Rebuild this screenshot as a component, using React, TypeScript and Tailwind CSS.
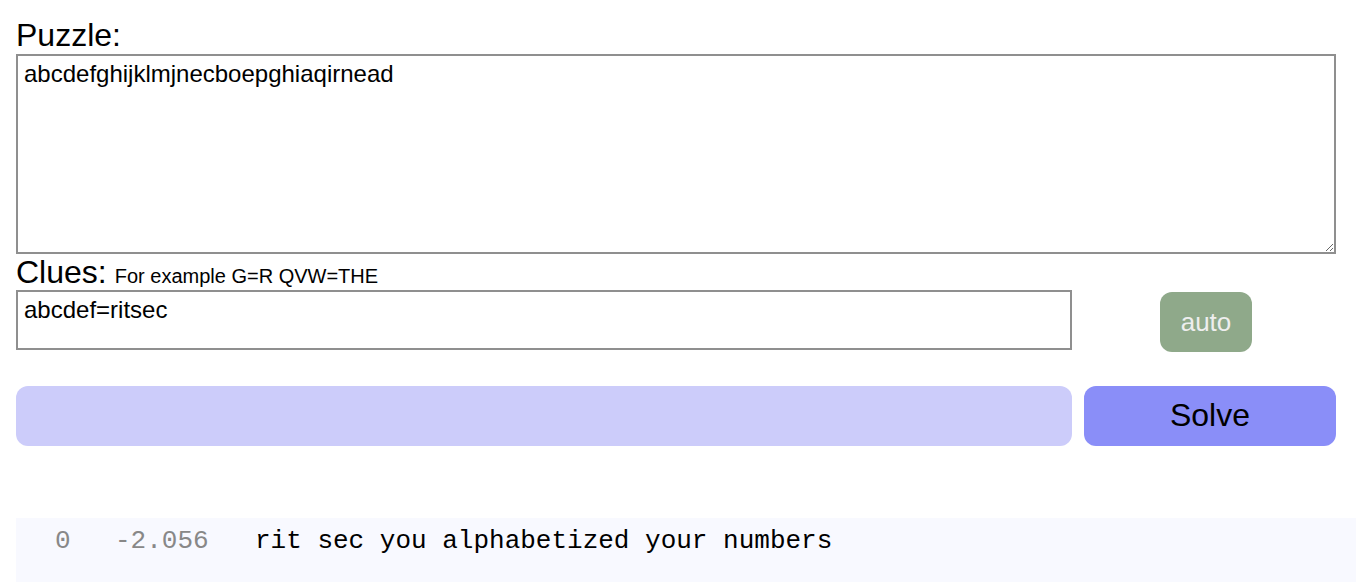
export default function App() {
  return (
    <div className="min-h-screen bg-white pl-4 pr-5 pt-4 font-['Liberation_Sans',Arial,sans-serif] text-black">
      <div className="text-[32px] leading-[38px]">Puzzle:</div>
      <textarea
        defaultValue="abcdefghijklmjnecboepghiaqirnead"
        className="block w-full h-[200px] border-2 border-[#8f8f8f] px-[6px] py-[4px] text-[24px] leading-[28px] outline-none resize"
      />
      <div className="flex items-baseline gap-2 mt-[2px] h-[34px]">
        <span className="text-[32px] leading-[32px]">Clues:</span>
        <span className="text-[20px] leading-[20px]">For example G=R QVW=THE</span>
      </div>
      <div className="flex items-start">
        <textarea
          defaultValue="abcdef=ritsec"
          className="block w-[1056px] h-[60px] border-2 border-[#8f8f8f] px-[6px] py-[4px] text-[24px] leading-[28px] outline-none resize-none"
        />
        <div className="flex-1 flex justify-center pl-3 pt-[2px]">
          <button className="w-[92px] h-[60px] rounded-[12px] bg-[#8fa98a] text-[#eeeeee] text-[26px] mr-2">
            auto
          </button>
        </div>
      </div>
      <div className="flex gap-3 mt-[34px]">
        <div className="w-[1056px] h-[60px] rounded-[12px] bg-[#ccccfa]" />
        <button className="flex-1 h-[60px] rounded-[12px] bg-[#8a8ef8] text-[32px] text-black pb-[2px]">
          Solve
        </button>
      </div>
      <div className="mt-[72px] -mr-5 h-[70px] bg-[#f8f9ff] flex items-start pt-[8px] font-['Liberation_Mono','Courier_New',monospace] text-[26px] leading-[30px]">
        <span className="w-[97px] pl-[39px] text-[#888888]">0</span>
        <span className="w-[142px] pl-[2px] text-[#888888]">-2.056</span>
        <span className="whitespace-pre">rit sec you alphabetized your numbers</span>
      </div>
    </div>
  );
}
